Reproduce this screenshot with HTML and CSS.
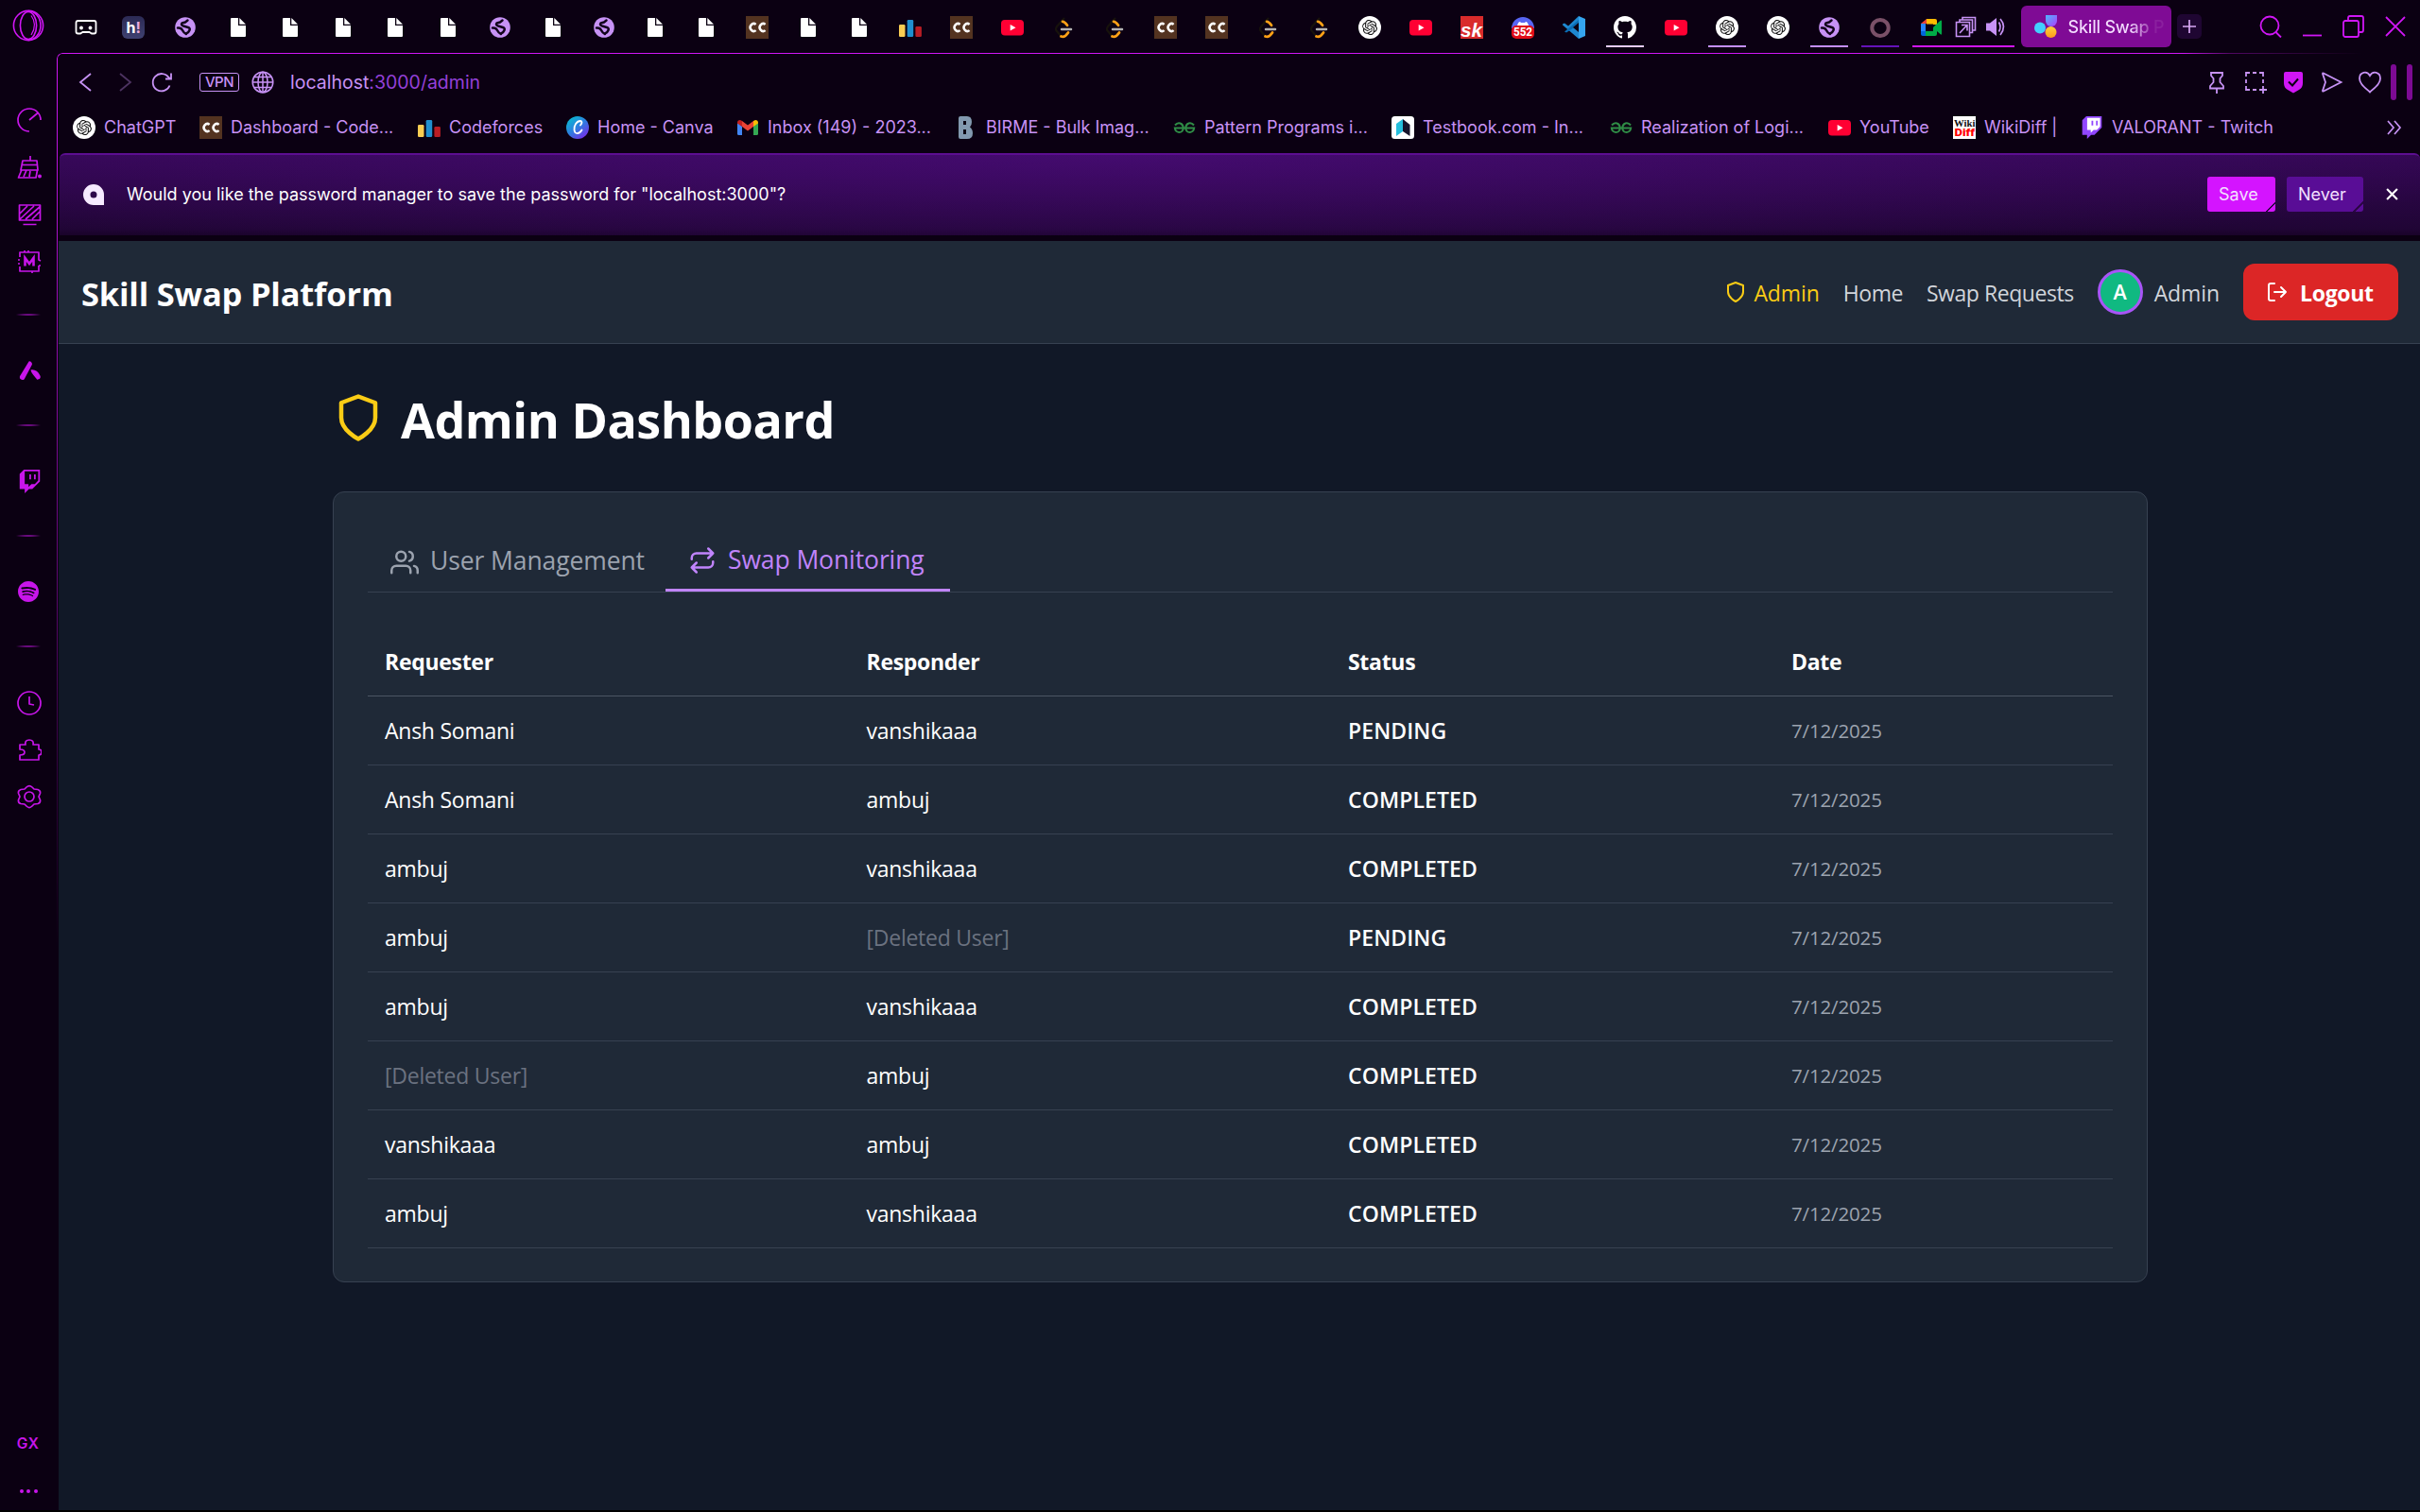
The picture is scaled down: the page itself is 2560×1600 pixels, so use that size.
FILE: index.html
```
<!DOCTYPE html>
<html lang="en">
<head>
<meta charset="utf-8">
<title>Skill Swap Platform</title>
<link rel="stylesheet" href="styles.css">
</head>
<body>
<svg class="defs" aria-hidden="true">
  <defs>
    <linearGradient id="g-canva" x1="0" y1="0" x2="0.8" y2="1"><stop offset="0" stop-color="#00c8cd"/><stop offset=".55" stop-color="#2f7be0"/><stop offset="1" stop-color="#7a2be8"/></linearGradient>
    <linearGradient id="g-h" x1="0" y1="0" x2="0" y2="1"><stop offset="0" stop-color="#2c2a55"/><stop offset="1" stop-color="#3f4170"/></linearGradient>
    <linearGradient id="g-pet" x1="0" y1="0" x2="1" y2="1"><stop offset="0" stop-color="#4cb6ff"/><stop offset="1" stop-color="#b03cff"/></linearGradient>
    <linearGradient id="g-sun" x1="0" y1="0" x2="0" y2="1"><stop offset="0" stop-color="#ffd23a"/><stop offset="1" stop-color="#ff9a1c"/></linearGradient>
    <symbol id="doc" viewBox="0 0 24 24"><path fill="#fff" d="M5 2h7v8h8v11a1 1 0 0 1-1 1H5a1 1 0 0 1-1-1V3a1 1 0 0 1 1-1zM13.300 2L20 8.700h-6.700z"/></symbol>
    <symbol id="earth" viewBox="0 0 24 24"><circle cx="12" cy="12" r="10.800" fill="#c792f5"/><path fill="none" stroke="#12041c" stroke-width="2.500" stroke-linecap="round" stroke-linejoin="round" d="M14.500 4.500L12 6.500 8.500 7.500Q7 9.500 10 10.500L15 12q2.500 1 1.500 3-1 2.500-3.500 3.500M4 12.500q3.500-.500 5 2.500t4 4"/></symbol>
    <symbol id="cc" viewBox="0 0 24 24"><path fill="#533320" d="M0 0h24v24H0z"/><path fill="none" stroke="#fff" stroke-width="2.500" d="M10.600 8.900a3.700 3.900 0 1 0 0 6.200M20.600 8.900a3.700 3.900 0 1 0 0 6.200"/></symbol>
    <symbol id="bars" viewBox="0 0 24 24"><rect x="0" y="9" width="6.500" height="13" rx="1.300" fill="#f9cd53"/><rect x="8.700" y="4" width="6.500" height="18" rx="1.300" fill="#1f8fcf"/><rect x="17.400" y="11" width="6.500" height="11" rx="1.300" fill="#b81d25"/></symbol>
    <symbol id="yt" viewBox="0 0 24 24"><rect y="4" width="24" height="16.500" rx="4" fill="#ff0033"/><path fill="#fff" d="M9.700 8.900v6.600l5.800-3.300z"/></symbol>
    <symbol id="leet" viewBox="0 0 24 24"><path fill="none" stroke="#17120c" stroke-width="2.200" d="M13 2L5 11q-2 3 0 5l5 6"/><path fill="none" stroke="#ffa116" stroke-width="2.700" stroke-linecap="round" d="M11 5.800q2.300 0 5 4M9.500 21.500q4 1.500 7.500-4"/><path stroke="#b3b3b3" stroke-width="2.500" stroke-linecap="round" d="M10 14h10"/></symbol>
    <symbol id="gpt" viewBox="0 0 24 24"><circle cx="12" cy="12" r="12" fill="#fff"/><path transform="translate(4 4) scale(.667)" fill="#111" d="M22.2819 9.8211a5.9847 5.9847 0 0 0-.5157-4.9108 6.0462 6.0462 0 0 0-6.5098-2.9A6.0651 6.0651 0 0 0 4.9807 4.1818a5.9847 5.9847 0 0 0-3.9977 2.9 6.0462 6.0462 0 0 0 .7427 7.0966 5.98 5.98 0 0 0 .511 4.9107 6.051 6.051 0 0 0 6.5146 2.9001A5.9847 5.9847 0 0 0 13.2599 24a6.0557 6.0557 0 0 0 5.7718-4.2058 5.9894 5.9894 0 0 0 3.9977-2.9001 6.0557 6.0557 0 0 0-.7475-7.0729zm-9.022 12.6081a4.4755 4.4755 0 0 1-2.8764-1.0408l.1419-.0804 4.7783-2.7582a.7948.7948 0 0 0 .3927-.6813v-6.7369l2.02 1.1686a.071.071 0 0 1 .038.052v5.5826a4.504 4.504 0 0 1-4.4945 4.4944zm-9.6607-4.1254a4.4708 4.4708 0 0 1-.5346-3.0137l.142.0852 4.783 2.7582a.7712.7712 0 0 0 .7806 0l5.8428-3.3685v2.3324a.0804.0804 0 0 1-.0332.0615L9.74 19.9502a4.4992 4.4992 0 0 1-6.1408-1.6464zM2.3408 7.8956a4.485 4.485 0 0 1 2.3655-1.9728V11.6a.7664.7664 0 0 0 .3879.6765l5.8144 3.3543-2.0201 1.1685a.0757.0757 0 0 1-.071 0l-4.8303-2.7865A4.504 4.504 0 0 1 2.3408 7.872zm16.5963 3.8558L13.1038 8.364 15.1192 7.2a.0757.0757 0 0 1 .071 0l4.8303 2.7913a4.4944 4.4944 0 0 1-.6765 8.1042v-5.6772a.79.79 0 0 0-.407-.667zm2.0107-3.0231l-.142-.0852-4.7735-2.7818a.7759.7759 0 0 0-.7854 0L9.409 9.2297V6.8974a.0662.0662 0 0 1 .0284-.0615l4.8303-2.7866a4.4992 4.4992 0 0 1 6.6802 4.66zM8.3065 12.863l-2.02-1.1638a.0804.0804 0 0 1-.038-.0567V6.0742a4.4992 4.4992 0 0 1 7.3757-3.4537l-.142.0805L8.704 5.459a.7948.7948 0 0 0-.3927.6813zm1.0976-2.3654l2.602-1.4998 2.6069 1.4998v2.9994l-2.5974 1.4997-2.6067-1.4997Z"/></symbol>
    <symbol id="github" viewBox="0 0 16 16"><path fill="#fff" d="M8 0C3.580 0 0 3.580 0 8c0 3.540 2.290 6.530 5.470 7.590.4.070.550-.170.550-.380 0-.190-.010-.820-.010-1.490-2.010.370-2.530-.490-2.690-.940-.090-.230-.480-.940-.820-1.130-.280-.150-.680-.520-.010-.530.630-.010 1.080.580 1.230.820.720 1.210 1.870.870 2.330.660.070-.520.280-.870.510-1.070-1.780-.2-3.640-.890-3.640-3.950 0-.870.310-1.590.820-2.150-.080-.2-.360-1.020.080-2.120 0 0 .670-.210 2.200.820.640-.180 1.320-.270 2-.270s1.360.090 2 .270c1.530-1.040 2.200-.820 2.200-.820.440 1.100.160 1.920.080 2.120.510.560.820 1.270.820 2.150 0 3.070-1.870 3.750-3.650 3.950.290.250.540.730.540 1.480 0 1.070-.010 1.930-.010 2.200 0 .210.150.460.550.380A8.010 8.010 0 0 0 16 8c0-4.420-3.580-8-8-8z"/></symbol>
    <symbol id="twitch" viewBox="0 0 24 24"><path fill="currentColor" d="M11.571 4.714h1.715v5.143H11.570zm4.715 0H18v5.143h-1.714zM6 0L1.714 4.286v15.428h5.143V24l4.286-4.286h3.428L22.286 12V0zm14.571 11.143l-3.428 3.428h-3.429l-3 3v-3H6.857V1.714h13.714Z"/></symbol>
    <symbol id="gfg" viewBox="0 0 24 24"><path fill="none" stroke="#2f8d46" stroke-width="2" d="M2 9.500q2.500-3 5.500-2t3.300 5q-.500 4.500-4.500 4.500-4-.500-4.500-4.500h10.200M22 9.500q-2.500-3-5.500-2t-3.300 5q.500 4.500 4.500 4.500 4-.500 4.500-4.500H12"/></symbol>
    <symbol id="shield" viewBox="0 0 24 24"><path fill="none" stroke="currentColor" stroke-width="2" stroke-linecap="round" stroke-linejoin="round" d="M12 22s8-4 8-10V5l-8-3-8 3v7c0 6 8 10 8 10z"/></symbol>
  </defs>
</svg>

<div class="browser">
  <aside class="rail">
    <svg class="opera" viewBox="0 0 34 34"><g fill="none" stroke="#d016f5" stroke-width="1.600"><circle cx="17" cy="17" r="15.600"/><ellipse cx="17" cy="17" rx="8.600" ry="14.500"/><path d="M17 1.500c6 0 13 6 13 15.500s-7 15.500-13 15.500"/></g><path fill="none" stroke="#d016f5" stroke-width="1.200" d="M20 6.500q7 9.500 0 20.500"/></svg>
    <div class="rail-group">
      <svg viewBox="0 0 26 26"><path d="M13 25a12 12 0 1 1 12-12M13 13L22 5.500"/></svg>
      <svg viewBox="0 0 26 26"><path d="M14 1v4.500M6 6h15l1 10H4zM6 10.500h15.500M5 15.500L1.500 24H20l1.500-8M10 16L7 23M14 17l-1 6"/><circle class="solid" cx="24" cy="22.500" r="2"/></svg>
      <svg viewBox="0 0 26 26"><path d="M2.500 3h22v16h-22zM3 12L11 4M3 18L18 4M9 18L24 5M16 18l8-8M6.500 23.500h14"/></svg>
      <svg viewBox="0 0 26 26"><path d="M3 8V3h20v8l2 1M23 17v6H3v-5M3 11H1M3 15H1M8 3V1M12 3V1M16 23v2M23 17h2"/><path class="bold" d="M8.500 17.500V9l4.500 6 4.500-6v8.500"/></svg>
    </div>
    <i class="sep sep-first"></i>
    <svg class="solo" viewBox="0 0 26 26"><path class="solid" d="M12 2.500a3 3 0 0 1 3.500 3.500L7 22a3 3 0 0 1-5-3zM14 12c4-1 8 1 10.500 6.500.800 2-.500 4-3.500 4-2-3-6-6-7-10.500z"/></svg>
    <i class="sep"></i>
    <svg class="solo" viewBox="0 0 24 24"><use href="#twitch"/></svg>
    <i class="sep"></i>
    <svg class="solo spot" viewBox="0 0 24 24"><path class="solid" d="M12 0C5.400 0 0 5.400 0 12s5.400 12 12 12 12-5.400 12-12S18.660 0 12 0zm5.521 17.340c-.240.359-.660.480-1.021.240-2.820-1.740-6.360-2.101-10.561-1.141-.418.122-.779-.179-.899-.539-.120-.421.180-.780.540-.900 4.560-1.021 8.520-.600 11.640 1.320.420.180.479.659.301 1.020zm1.440-3.300c-.301.420-.841.600-1.262.300-3.239-1.980-8.159-2.580-11.939-1.380-.479.120-1.020-.120-1.140-.600-.120-.480.120-1.021.600-1.141C9.600 9.900 15 10.561 18.720 12.840c.361.181.540.780.241 1.200zm.120-3.360C15.240 8.400 8.820 8.160 5.160 9.301c-.600.179-1.200-.181-1.380-.721-.180-.601.180-1.200.720-1.381 4.260-1.260 11.280-1.020 15.721 1.621.539.300.719 1.020.419 1.560-.299.421-1.020.599-1.559.300z"/></svg>
    <i class="sep"></i>
    <div class="rail-group tail">
      <svg viewBox="0 0 26 26"><circle cx="13" cy="13" r="12"/><path d="M13 6v8l5 1"/></svg>
      <svg viewBox="0 0 26 26"><path d="M3 7h6q-1-5 4-5t4 5h6v5q3 0 3 3t-3 3v5H3v-5q5 0 5-3t-5-3z"/></svg>
      <svg viewBox="0 0 26 26"><path d="M10 3q3-3 6 0l2 2 4 .500q3 1 2.500 4L23 13l1.500 3.500q.500 3-2.500 4L18 21l-2 2q-3 3-6 0l-2-2-4-.500q-3-1-2.500-4L3 13 1.500 9.500q-.500-3 2.500-4L8 5z"/><circle cx="13" cy="13" r="5"/></svg>
    </div>
    <span class="gx">GX</span>
    <span class="dots"><i></i><i></i><i></i></span>
  </aside>

  <div class="main">
    <div class="tabs">
      <div class="tabset tight">
        <svg viewBox="0 0 24 24"><path fill="none" stroke="#fff" stroke-width="1.800" d="M3.500 5h17q2 0 2 2v9.500q0 2-2 2h-2.500l-2.500-1.500h-7L6 18.500H3.500q-2 0-2-2V7q0-2 2-2z"/><circle cx="7" cy="12.500" r="1.900" fill="#fff"/><circle cx="16.500" cy="12.500" r="1.900" fill="#fff"/></svg>
        <svg viewBox="0 0 24 24"><rect width="24" height="24" rx="6" fill="url(#g-h)"/><text x="4.500" y="17.500" class="t-h">h<tspan fill="#e9a9d8">!</tspan></text></svg>
      </div>
      <div class="tabset wide">
        <svg><use href="#earth"/></svg><svg><use href="#doc"/></svg><svg><use href="#doc"/></svg><svg><use href="#doc"/></svg><svg><use href="#doc"/></svg><svg><use href="#doc"/></svg><svg><use href="#earth"/></svg><svg><use href="#doc"/></svg>
      </div>
      <div class="tabset">
        <svg><use href="#earth"/></svg><svg><use href="#doc"/></svg><svg><use href="#doc"/></svg><svg><use href="#cc"/></svg><svg><use href="#doc"/></svg><svg><use href="#doc"/></svg><svg><use href="#bars"/></svg><svg><use href="#cc"/></svg><svg><use href="#yt"/></svg><svg><use href="#leet"/></svg><svg><use href="#leet"/></svg><svg><use href="#cc"/></svg><svg><use href="#cc"/></svg><svg><use href="#leet"/></svg><svg><use href="#leet"/></svg><svg><use href="#gpt"/></svg><svg><use href="#yt"/></svg>
        <svg viewBox="0 0 24 24"><path fill="#d92b2b" d="M0 0h24v24H0z"/><text x="0" y="21.500" class="t-sk" textLength="23" lengthAdjust="spacingAndGlyphs">sk</text></svg>
        <svg viewBox="0 0 24 24"><path fill="#5865f2" d="M0 13a12 12 0 0 1 24 0z"/><path fill="#fff" d="M6 10q1-4 3-4l1 1h4l1-1q2 0 3 4z"/><rect y="10" width="24" height="14" rx="5" fill="#df0d18"/><text x="12" y="21" text-anchor="middle" class="t-num" textLength="20" lengthAdjust="spacingAndGlyphs">552</text></svg>
        <svg viewBox="0 0 24 24"><path fill="#1e88d0" d="M17 0L6 10.500 2 7.500 0 8.500v1l3.500 3L17 24z"/><path fill="#0a6db5" d="M2 16.500L17 4v5L4 17.500z"/><path fill="#35a5ee" d="M17 0l7 3v18l-7 3z"/><path fill="#0b0012" d="M17 7v10l-6-5z"/></svg>
        <svg class="u u-white"><use href="#github"/></svg>
        <svg><use href="#yt"/></svg>
        <svg class="u"><use href="#gpt"/></svg>
        <svg><use href="#gpt"/></svg>
        <svg class="u"><use href="#earth"/></svg>
        <svg class="u u-dim" viewBox="0 0 24 24"><ellipse cx="12" cy="12.500" rx="8.700" ry="8.500" fill="none" stroke="#7a5068" stroke-width="4"/></svg>
      </div>
      <div class="meet">
        <svg viewBox="0 0 24 24"><path fill="#ea4335" d="M1 8l6-5v5z"/><path fill="#ffba00" d="M7 3h9q2 0 2 2v4H7z"/><path fill="#2684fc" d="M1 8h5v9H1z"/><path fill="#0066da" d="M1 16h6v5H3q-2 0-2-2z"/><path fill="#00ac47" d="M6 16h8v-4l4-4 4-3.500q1-.500 1 1v13q0 1.500-1 1L18 16v3q0 2-2 2H6z"/><path fill="#0b0012" d="M7 8.500h7v7.500H7z"/></svg>
        <svg viewBox="0 0 24 24"><path fill="none" stroke="#c792f5" stroke-width="1.600" d="M2.500 6.500h14v15h-14zM6 6.500V4h13.500v13.500h-3M9 4V1.500h13.500V15h-3M6 18l7.500-8M8 9.500h6v6"/></svg>
        <svg viewBox="0 0 24 24"><path fill="#c792f5" d="M2 7.500h4L13 2v19l-7-5.500H2z"/><path fill="none" stroke="#c792f5" stroke-width="1.700" d="M15.500 6.500q3 5 0 10M17 3q7 8 0 17"/></svg>
      </div>
      <div class="tab-active">
        <svg viewBox="0 0 24 24"><path fill="url(#g-pet)" d="M12 0h12v6a6 6 0 0 1-12 0z"/><circle cx="6" cy="13.500" r="6" fill="#42d0ff"/><circle cx="17.500" cy="18" r="6" fill="url(#g-sun)"/></svg>
        <span>Skill Swap P</span>
      </div>
      <div class="newtab"><svg viewBox="0 0 24 24"><path d="M12 5v14M5 12h14"/></svg></div>
      <div class="winctl">
        <svg viewBox="0 0 24 24"><circle cx="11" cy="11" r="9.500"/><path d="M17.500 18L23 23.500"/></svg>
        <svg viewBox="0 0 24 24"><path d="M2 21.500h20"/></svg>
        <svg viewBox="0 0 24 24"><rect x="1" y="6" width="16" height="17" rx="2"/><path d="M6 6V3q0-2 2-2h12q2 0 2 2v13q0 2-2 2h-3"/></svg>
        <svg viewBox="0 0 24 24"><path d="M2 2l20 20M22 2L2 22"/></svg>
      </div>
    </div>

    <div class="frame">
      <div class="address">
        <svg viewBox="0 0 24 24"><path d="M17 3L6 12l11 9"/></svg>
        <svg class="off" viewBox="0 0 24 24"><path d="M7 3l11 9-11 9"/></svg>
        <svg viewBox="0 0 24 24"><path d="M19.500 15.500a9.200 9.200 0 1 1-1-8.500l1.500 1M21 2.500V8.500h-6"/></svg>
        <b class="vpn">VPN</b>
        <svg class="globe" viewBox="0 0 24 24"><circle cx="12" cy="12" r="10.800"/><ellipse cx="12" cy="12" rx="5" ry="10.800"/><path d="M12 1v22M1.500 12h21M3 6.500h18M3 17.500h18"/></svg>
        <span class="url">localhost<em>:3000/admin</em></span>
        <div class="actions">
          <svg viewBox="0 0 24 24"><path d="M6 2h12v3l-2.500 3v4L19 16v2.500H5V16l3.500-4V8L6 5zM12 18.500V24"/></svg>
          <svg viewBox="0 0 24 24"><path d="M2 6V2h4M9 2h4M16 2h4v4M20 9v4M2 9v4M2 16v4h4M9 20h4M20 16v8M16 20h8"/></svg>
          <svg viewBox="0 0 24 24"><path class="badge" d="M2 3q0-2 2-2h16q2 0 2 2v10q0 5-4 7l-6 3.500L6 20q-4-2-4-7z"/><path class="tick" d="M7 11.500l4 4 6-7"/></svg>
          <svg viewBox="0 0 24 24"><path d="M3 2.500q-1-.500-1 .500l3 9-3 9q0 1 1 .500L21.500 12z"/></svg>
          <svg viewBox="0 0 24 24"><path d="M12 22.500C6 17 1 13.500 1 8c0-7 8-8.500 11-3 3-5.500 11-4 11 3 0 5.500-5 9-11 14.500z"/></svg>
        </div>
        <i class="bar"></i><i class="bar"></i>
      </div>

      <div class="bookmarks">
        <a><svg><use href="#gpt"/></svg>ChatGPT</a>
        <a><svg><use href="#cc"/></svg>Dashboard - Code...</a>
        <a><svg><use href="#bars"/></svg>Codeforces</a>
        <a><svg viewBox="0 0 24 24"><circle cx="12" cy="12" r="12" fill="url(#g-canva)"/><path fill="none" stroke="#fff" stroke-width="1.800" stroke-linecap="round" d="M15 9.500q3-4 0-4.500c-4 0-7 5-6.500 9.500.500 5 5.500 4.500 8 0"/></svg>Home - Canva</a>
        <a><svg viewBox="0 0 24 24"><path fill="#4285f4" d="M1 7l5 3.500V20H2.500Q1 20 1 18.500z"/><path fill="#34a853" d="M23 7l-5 3.500V20h3.500q1.500 0 1.500-1.500z"/><path fill="#ea4335" d="M6 5l6 4.500L18 5v6l-6 4.500L6 11z"/><path fill="#c5221f" d="M1 7q0-3 3-3l2 1v6L1 7.500z"/><path fill="#fbbc04" d="M23 7q0-3-3-3l-2 1v6l5-3.500z"/></svg>Inbox (149) - 2023...</a>
        <a><svg viewBox="0 0 24 24"><path fill="#8299af" fill-rule="evenodd" d="M4 2q0-2 2-2h7q5 0 5 6 0 4-2 5.500 3 2 3 6.500 0 6-6 6H6q-2 0-2-2zm5 3v4h3V5zm0 9v5h3v-5z"/></svg>BIRME - Bulk Imag...</a>
        <a><svg><use href="#gfg"/></svg>Pattern Programs i...</a>
        <a><svg viewBox="0 0 24 24"><rect width="24" height="24" rx="3.500" fill="#fff"/><path fill="#25bfdc" d="M12 3v13l-7 5V8z"/><path fill="#17142b" d="M12 3l7.500 6v12L12 16z"/></svg>Testbook.com - In...</a>
        <a><svg><use href="#gfg"/></svg>Realization of Logi...</a>
        <a><svg><use href="#yt"/></svg>YouTube</a>
        <a><svg viewBox="0 0 24 24"><path fill="#fff" d="M0 0h24v24H0z"/><text x="1" y="10.500" class="t-wiki" textLength="22.500" lengthAdjust="spacingAndGlyphs">Wiki</text><text x="1.500" y="21" class="t-diff" textLength="21.500" lengthAdjust="spacingAndGlyphs">Diff</text></svg>WikiDiff |</a>
        <a><svg viewBox="0 0 24 24"><path fill="#9146ff" d="M6 0L1.700 4.300v15.400h5.100V24l4.300-4.300h3.500L22.300 12V0z"/><path fill="#fff" d="M6.900 1.700h13.700v9.400l-3.500 3.500h-3.400l-3 3v-3H6.900z"/><path fill="#9146ff" d="M11.500 4.700h1.800v5.100h-1.800zM16.300 4.700H18v5.100h-1.700z"/></svg>VALORANT - Twitch</a>
        <svg class="more" viewBox="0 0 24 24"><path d="M5 5l6 7-6 7M12 5l6 7-6 7"/></svg>
      </div>

      <div class="infobar">
        <svg class="key" viewBox="0 0 22 22"><path fill="#f6eaff" fill-rule="evenodd" d="M11 0a11 11 0 0 1 11 11v11H11a11 11 0 0 1 0-22zm0 7.500a3.500 3.500 0 1 0 0 7 3.500 3.500 0 0 0 0-7z"/></svg>
        <span class="msg">Would you like the password manager to save the password for "localhost:3000"?</span>
        <button class="save">Save</button>
        <button class="never">Never</button>
        <svg class="x" viewBox="0 0 12 12"><path d="M1 1l10 10M11 1L1 11"/></svg>
      </div>

      <div class="page">
        <header class="topnav">
          <h2>Skill Swap Platform</h2>
          <nav>
            <a class="adminlink"><svg><use href="#shield"/></svg><span>Admin</span></a>
            <a>Home</a>
            <a class="swaps">Swap Requests</a>
            <a class="me"><b>A</b><span>Admin</span></a>
            <button class="logout"><svg viewBox="0 0 24 24"><path d="M9 21H5a2 2 0 0 1-2-2V5a2 2 0 0 1 2-2h4M16 17l5-5-5-5M21 12H9"/></svg><span>Logout</span></button>
          </nav>
        </header>
        <main>
          <h1><svg><use href="#shield"/></svg><span>Admin Dashboard</span></h1>
          <section class="card">
            <div class="switch">
              <a class="users"><svg viewBox="0 0 24 24"><path d="M17 21v-2a4 4 0 0 0-4-4H5a4 4 0 0 0-4 4v2M23 21v-2a4 4 0 0 0-3-3.870M16 3.130a4 4 0 0 1 0 7.750"/><circle cx="9" cy="7" r="4"/></svg><span>User Management</span></a>
              <a class="on"><svg viewBox="0 0 24 24"><path d="M17 2l4 4-4 4M3 11v-1a4 4 0 0 1 4-4h14M7 22l-4-4 4-4M21 13v1a4 4 0 0 1-4 4H3"/></svg><span>Swap Monitoring</span></a>
            </div>
            <table>
              <thead><tr><th>Requester</th><th>Responder</th><th>Status</th><th>Date</th></tr></thead>
              <tbody>
                <tr><td>Ansh Somani</td><td>vanshikaaa</td><td class="st">PENDING</td><td class="dt">7/12/2025</td></tr>
                <tr><td>Ansh Somani</td><td>ambuj</td><td class="st">COMPLETED</td><td class="dt">7/12/2025</td></tr>
                <tr><td>ambuj</td><td>vanshikaaa</td><td class="st">COMPLETED</td><td class="dt">7/12/2025</td></tr>
                <tr><td>ambuj</td><td class="gone">[Deleted User]</td><td class="st">PENDING</td><td class="dt">7/12/2025</td></tr>
                <tr><td>ambuj</td><td>vanshikaaa</td><td class="st">COMPLETED</td><td class="dt">7/12/2025</td></tr>
                <tr><td class="gone">[Deleted User]</td><td>ambuj</td><td class="st">COMPLETED</td><td class="dt">7/12/2025</td></tr>
                <tr><td>vanshikaaa</td><td>ambuj</td><td class="st">COMPLETED</td><td class="dt">7/12/2025</td></tr>
                <tr><td>ambuj</td><td>vanshikaaa</td><td class="st">COMPLETED</td><td class="dt">7/12/2025</td></tr>
              </tbody>
            </table>
          </section>
        </main>
      </div>
    </div>
  </div>
</div>
</body>
</html>
```
FILE: styles.css
```
* { box-sizing: border-box; }
body { margin: 0; background: #000; font-family: "Inter", "Liberation Sans", sans-serif; }
svg { display: block; flex: none; }
i, em { font-style: normal; }
.defs { position: absolute; width: 0; height: 0; }
.browser { display: flex; width: 2560px; height: 1598px; background: #0b0012; overflow: hidden; }

/* left rail */
.rail { width: 60px; flex: none; display: flex; flex-direction: column; align-items: center; color: #c815ea; }
.opera { width: 34px; height: 34px; margin-top: 10px; }
.rail-group { display: flex; flex-direction: column; gap: 24px; margin-top: 70px; padding-left: 2px; }
.rail-group svg { width: 26px; height: 26px; fill: none; stroke: #c815ea; stroke-width: 1.7; stroke-linejoin: round; }
.rail .solid { fill: #c815ea; stroke: none; }
.rail .bold { stroke-width: 2.6; stroke-linejoin: miter; }
.sep { width: 30px; height: 2px; background: radial-gradient(closest-side, #c815ea, rgba(200, 21, 234, 0)); }
.sep-first { margin-top: 42px; }
.solo { width: 25px; height: 25px; margin: 46px 0 44px 2px; }
.solo.spot { width: 22px; height: 22px; margin: 47px 0 46px; }
.tail { margin-top: 46px; gap: 23.500px; }
.gx { margin-top: auto; font: 600 15.500px/18px "Inter", sans-serif; letter-spacing: .5px; padding-right: 1px; }
.dots { display: flex; gap: 3.5px; margin: 39px 0 18px; }
.dots i { width: 4px; height: 4px; border-radius: 2px; background: #c815ea; }

/* tab strip */
.main { flex: 1; min-width: 0; display: flex; flex-direction: column; }
.tabs { height: 56px; display: flex; align-items: flex-start; padding: 6px 14px 0 19px; }
.tabset, .meet { display: flex; gap: 30px; padding-top: 11px; }
.tabset svg, .meet svg { width: 24px; height: 24px; overflow: visible; }
.tabset.tight { gap: 26px; }
.tabset.wide { gap: 31.500px; margin-left: 31px; }
.tabset:nth-child(3) { margin-left: 30px; }
.u { box-sizing: content-box; padding: 0 8px 7px; margin: 0 -8px; border-bottom: 2px solid #c48fff; }
.u-white { border-color: #e6ccff; }
.u-dim { border-color: #6412b8; }
.meet { gap: 8px; padding: 11px 8px 7px 8px; margin-left: 22px; border-bottom: 2px solid #d016f5; height: 44px; width: 108px; }
.meet svg:nth-child(1) { margin-right: 4px; }
.tab-active { width: 159px; height: 44px; margin-left: 7px; padding: 0 12px 0 14px; display: flex; align-items: center; gap: 12px; background: #7f0b95; border-radius: 6px; }
.tab-active svg { width: 24px; height: 24px; }
.tab-active span { font-size: 18px; font-weight: 500; white-space: nowrap; background: linear-gradient(90deg, #f3dcff 65%, rgba(243, 220, 255, .1) 90%); -webkit-background-clip: text; background-clip: text; color: transparent; letter-spacing: -.2px; }
.newtab { width: 26px; height: 26px; margin: 9px 0 0 6px; background: #1f0632; border-radius: 5px; display: grid; place-items: center; }
.newtab svg { width: 24px; height: 24px; stroke: #d9a8f5; stroke-width: 1.7; }
.winctl { margin-left: auto; display: flex; gap: 20px; padding-top: 10px; }
.winctl svg { width: 24px; height: 24px; fill: none; stroke: #d016f5; stroke-width: 1.8; }
.t-h { font: 700 16px "Inter"; fill: #fff; }
.t-sk { font: italic 900 21px "Liberation Sans"; fill: #fff; }
.t-num { font: 700 13px "Roboto"; fill: #fff; }
.t-wiki { font: 700 11px "Liberation Serif"; fill: #111; }
.t-diff { font: 900 11px "Roboto"; fill: #f00; }

/* browser frame */
.frame { position: relative; flex: 1; display: flex; flex-direction: column; padding: 1px 0 0 2px; }
.frame::before { content: ""; position: absolute; inset: 0; pointer-events: none; border: 1px solid #d016f5; border-width: 1px 0 0 1px; border-radius: 6px 0 0 0; -webkit-mask: linear-gradient(90deg, #000 2250px, rgba(0,0,0,.35) 2300px, transparent 2440px), linear-gradient(#000, transparent 950px); -webkit-mask-size: 100% 4px, 6px calc(100% - 4px); -webkit-mask-position: 0 0, 0 4px; -webkit-mask-repeat: no-repeat; }
.address { height: 60px; display: flex; align-items: center; padding: 0 8px 0 17px; }
.address svg { width: 24px; height: 24px; fill: none; stroke: #c792f5; stroke-width: 1.8; }
.address > svg + svg { margin-left: 17px; }
.address > svg.off { opacity: .35; }
.address > svg:nth-child(3) { margin-left: 16px; }
.vpn { margin-left: 27px; width: 42px; height: 20px; border: 1.5px solid #c792f5; border-radius: 3px; color: #c792f5; font-size: 15px; font-weight: 500; line-height: 17px; text-align: center; letter-spacing: -.5px; }
.address .globe { margin-left: 13px; stroke-width: 1.5; }
.url { margin-left: 17px; font-size: 19.500px; color: #c792f5; }
.url em { color: #9440d8; }
.actions { margin-left: auto; display: flex; gap: 16.500px; margin-right: 10px; }
.actions .badge { fill: #d016f5; stroke: none; }
.actions .tick { stroke: #0b0012; stroke-width: 2; }
.bar { width: 6px; height: 38px; border-radius: 3px; background: #7d0a94; }
.bar + .bar { margin-left: 11px; }

.bookmarks { height: 45px; display: grid; grid-template-columns: 134px 231px 157px 180px 231px 231px 231px 231px 231px 132px 135px 1fr 24px; align-items: center; padding: 0 15px 10px; }
.bookmarks a { display: flex; align-items: center; gap: 9px; font-size: 18px; color: #c792f5; white-space: nowrap; }
.bookmarks a svg, .more { width: 24px; height: 24px; }
.more { fill: none; stroke: #c792f5; stroke-width: 1.7; }

.infobar { height: 87px; margin: 0 0 6px 1px; display: flex; align-items: center; padding: 0 23px 3px 25px; border-radius: 6px 6px 0 0; border-top: 2px solid #5c0e91; background: radial-gradient(ellipse 1500px 120px at 45% 0, rgba(82, 14, 134, .55), rgba(82, 14, 134, 0)), linear-gradient(#330753, #200535 92%, #190329); }
.key { width: 22px; height: 22px; margin-top: 2px; }
.msg { margin-left: 24px; font-size: 18px; color: #fff; }
.infobar button { border: 0; height: 37px; border-radius: 3px; font: 18px "Inter", sans-serif; color: #f3e0ff; text-align: left; padding: 0 12px; }
.save { margin-left: auto; width: 72px; background: linear-gradient(135deg, #d414ff 90.500%, #2c0647 90.500% 92.500%, #d414ff 92.500%); }
.never { margin-left: 12px; width: 81px; background: linear-gradient(135deg, #590d96 90.500%, #2c0647 90.500% 92.500%, #590d96 92.500%); }
.x { width: 13px; height: 13px; margin-left: 24px; stroke: #fff; stroke-width: 2; }

/* application */
.page { flex: 1; background: #111827; color: #fff; font-family: "Open Sans", "Noto Sans", sans-serif; }
.topnav { height: 109px; background: #1f2937; border-bottom: 1px solid #374151; display: flex; justify-content: space-between; align-items: center; padding: 0 23px 0 24px; }
h2 { margin: 0; padding-top: 2px; font-size: 34.500px; font-weight: 700; letter-spacing: -.2px; }
nav { display: flex; align-items: center; gap: 25px; font-size: 23px; color: #d1d5db; letter-spacing: -.45px; }
nav a { padding-top: 2px; }
.adminlink { display: flex; align-items: center; gap: 7px; color: #facc15; letter-spacing: -.1px; }
.adminlink svg { width: 24px; height: 24px; margin-top: -3px; }
.me { display: flex; align-items: center; gap: 12px; letter-spacing: -.1px; }
.me b { width: 48px; height: 48px; border-radius: 50%; border: 3px solid #a855f7; background: #10b981; color: #fff; display: grid; place-items: center; font-size: 21.500px; line-height: 1; font-weight: 600; margin-top: -3px; }
.logout { display: flex; align-items: center; gap: 12px; width: 164px; height: 60px; border: 0; border-radius: 12px; background: #dc2626; color: #fff; font: 700 23px "Open Sans", sans-serif; padding: 0 24px; letter-spacing: -.3px; }
.logout svg { width: 24px; height: 24px; margin-top: -1px; }
.logout span { padding-top: 1px; }
.logout svg, .switch svg { fill: none; stroke: currentColor; stroke-width: 2; stroke-linecap: round; stroke-linejoin: round; }
main { width: 1920px; margin-left: 290px; padding-top: 36px; }
h1 { margin: 0; height: 86px; display: flex; align-items: center; gap: 18px; font-size: 52px; font-weight: 700; letter-spacing: -.5px; }
h1 svg { width: 54px; height: 54px; color: #facc15; margin-top: -2px; }
.card { margin-top: 34px; height: 837px; border: 1px solid #374151; border-radius: 12px; background: #1f2937; padding: 36px; }
.switch { display: flex; height: 70px; border-bottom: 1px solid #374151; font-size: 26.500px; font-weight: 500; color: #9ca3af; margin-bottom: 36px; }
.switch a { display: flex; align-items: center; gap: 12px; padding: 6px 24px 0; white-space: nowrap; letter-spacing: -.1px; }
.switch span { padding-bottom: 3px; }
.switch .users { width: 315px; }
.switch .on { width: 301px; color: #c084fc; border-bottom: 3px solid #c084fc; }
.switch svg { width: 30px; height: 30px; }
table { width: 1846px; border-collapse: collapse; table-layout: fixed; font-size: 23px; letter-spacing: -.25px; }
th, td { height: 73px; padding: 0 18px; text-align: left; border-bottom: 1px solid #374151; }
th { border-color: #4b5563; padding-top: 2px; font-weight: 700; letter-spacing: -.3px; }
th:nth-child(1), th:nth-child(2) { width: 509.500px; }
th:nth-child(3) { width: 469px; }
.st { font-weight: 600; letter-spacing: .1px; }
.dt { font-size: 20.500px; color: #9ca3af; letter-spacing: -.15px; }
.gone { color: #6b7280; }
```
